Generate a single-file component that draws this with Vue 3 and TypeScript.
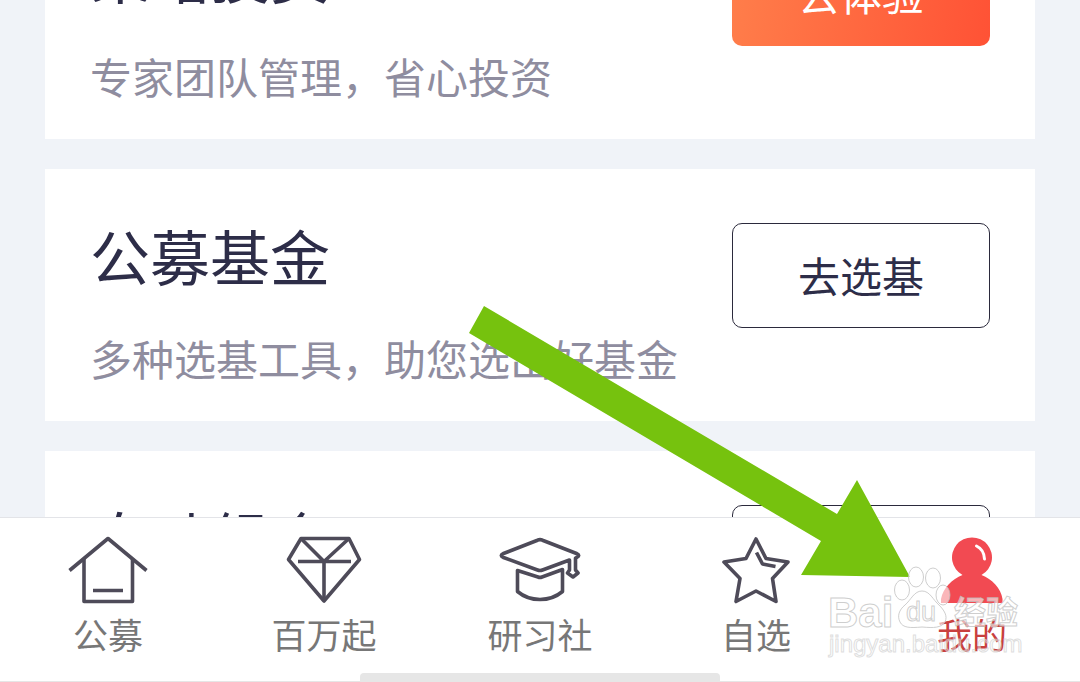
<script setup lang="ts">
import { ref } from 'vue'

interface FundCard {
  title: string
  desc: string
  action: string
  primary?: boolean
}

interface Tab {
  id: string
  label: string
}

const cards: FundCard[] = [
  { title: '策略投资', desc: '专家团队管理，省心投资', action: '去体验', primary: true },
  { title: '公募基金', desc: '多种选基工具，助您选出好基金', action: '去选基' },
  { title: '自动组合', desc: '智能定投，自动调仓', action: '去看看' },
]

const tabs: Tab[] = [
  { id: 'home', label: '公募' },
  { id: 'diamond', label: '百万起' },
  { id: 'study', label: '研习社' },
  { id: 'star', label: '自选' },
  { id: 'mine', label: '我的' },
]

const active = ref('mine')
</script>

<template>
  <div class="app">
    <main class="feed">
      <section v-for="card in cards" :key="card.title" class="card">
        <div class="info">
          <h2 class="title">{{ card.title }}</h2>
          <p class="desc">{{ card.desc }}</p>
        </div>
        <button type="button" class="action" :class="{ primary: card.primary }">{{ card.action }}</button>
      </section>
    </main>

    <footer class="footer">
      <nav class="tabs">
        <button
          v-for="tab in tabs"
          :key="tab.id"
          type="button"
          class="tab"
          :class="{ active: active === tab.id }"
          @click="active = tab.id"
        >
          <svg class="icon" viewBox="0 0 84 72" aria-hidden="true">
            <g v-if="tab.id === 'home'">
              <path d="M3.500 35.500L42 3.500L80.500 35.500" />
              <path d="M18 24V66.500H66.500V24M27 55.500H57" />
            </g>
            <g v-else-if="tab.id === 'diamond'">
              <path d="M19 3.500H67L77.500 24.500L42 66L6.500 24.500Z" />
              <path d="M19 3.500L42 26.500L67 3.500M42 26.500V66M16 26.500H69" />
            </g>
            <g v-else-if="tab.id === 'study'">
              <path d="M39.500 5.200Q42 4 44.500 5.200L78.500 18.500Q83 20.500 78.500 22.500L77.500 23V35L80 38L75 42L69.500 38L71.500 35V25L44.500 35Q42 36 39.500 35L5.500 22.500Q1 20.500 5.500 18.500Z" />
              <path d="M19.500 35.500V56.500Q29 64.500 42 64.500Q55 64.500 64.500 56.500V34.500L44 42Q42 42.800 40 42Z" />
            </g>
            <g v-else-if="tab.id === 'star'">
              <path d="M42 4L52 23.500L74 27L58.500 43.500L62 66.500L42 56L22 66.500L26 43.500L10 27L32 23.500Z" />
              <path d="M42.500 17.500L48.500 29L61.500 31.500" />
            </g>
            <g v-else>
              <path class="solid" d="M32.500 40A20 20 0 1 1 51.500 40C62 44 71 53 72.500 64V68H11V64C13 53 22 44 32.500 40Z" />
              <path class="shine" d="M46.500 11Q54 14.500 54.500 24" />
            </g>
          </svg>
          <span class="label">{{ tab.label }}</span>
        </button>
      </nav>
      <div class="home-bar"></div>
    </footer>

    <svg class="overlay" viewBox="0 0 1080 682" preserveAspectRatio="xMaxYMax meet" aria-hidden="true">
      <polygon class="arrow" points="484,306 837,514 857,480 910,577 801,575 821,541 469,333" />
      <g class="mark">
        <ellipse cx="902" cy="590" rx="7.500" ry="10" />
        <ellipse cx="916" cy="577" rx="7.500" ry="10" />
        <ellipse cx="933" cy="578" rx="7.500" ry="10" />
        <ellipse cx="943" cy="595" rx="7" ry="10" />
        <path d="M922 591C914 591 911 600 905 605C899 610 897 616 900 622C903 628 910 628 922 627C934 628 941 628 945 622C948 616 944 610 939 605C933 600 930 591 922 591Z" />
        <text class="latin" x="828" y="627">Bai</text>
        <text class="du" x="906" y="621">du</text>
        <text class="hanzi" x="954" y="624">经验</text>
        <text class="site" x="829" y="652">jingyan.baidu.com</text>
      </g>
    </svg>
  </div>
</template>

<style>
body {
  margin: 0;
}
</style>

<style scoped>
.app {
  position: relative;
  display: flex;
  flex-direction: column;
  height: 100vh;
  overflow: hidden;
  background: #f0f3f8;
  font-family: "Noto Sans CJK SC", sans-serif;
}

.feed {
  flex: 1;
  min-height: 0;
  overflow: hidden;
  display: flex;
  flex-direction: column;
  gap: 30px;
  padding: 0 45px;
}

.card {
  flex: none;
  display: flex;
  justify-content: space-between;
  align-items: flex-start;
  padding: 54px 45px 33px;
  background: #fff;
}

/* The list rests partly scrolled, with its first card under the top edge. */
.card:first-child {
  margin-top: -113px;
}

.title {
  margin: 0 0 41px;
  font-size: 60px;
  line-height: 64px;
  font-weight: 400;
  color: #2d2d48;
}

.desc {
  margin: 0;
  font-size: 42px;
  line-height: 60px;
  color: #8f8d9f;
}

.action {
  box-sizing: border-box;
  width: 258px;
  height: 105px;
  padding: 0 0 2px;
  border: 1px solid #2b2a3c;
  border-radius: 10px;
  background: #fff;
  color: #2d2d48;
  font-family: inherit;
  font-size: 42px;
  line-height: 60px;
}

.action.primary {
  border: 0;
  background: linear-gradient(100deg, #ff7f4b, #ff5235);
  color: #fff;
}

.footer {
  flex: none;
  border-top: 1px solid #e3e4e8;
  border-bottom: 1px solid #e6e6e6;
  background: #fff;
}

.tabs {
  display: grid;
  grid-template-columns: repeat(5, 1fr);
  padding-top: 17px;
}

.tab {
  display: flex;
  flex-direction: column;
  align-items: center;
  gap: 4px;
  padding: 0;
  border: 0;
  background: none;
  color: #777;
  font-family: inherit;
}

.tab.active {
  color: #c9403e;
}

.icon {
  width: 84px;
  height: 72px;
  fill: none;
  stroke: #4e4b59;
  stroke-width: 3.6;
  stroke-linejoin: round;
}

.icon .solid {
  fill: #f24a52;
  stroke: none;
}

.icon .shine {
  stroke: #fff;
  stroke-width: 3;
  stroke-linecap: round;
}

.label {
  font-size: 35px;
  line-height: 46px;
}

.home-bar {
  width: 33.333%;
  height: 8px;
  margin: 16px auto 0;
  border-radius: 4px 4px 0 0;
  background: #e6e6e6;
}

.overlay {
  position: absolute;
  inset: 0;
  width: 100%;
  height: 100%;
  pointer-events: none;
}

.arrow {
  fill: #76c20e;
}

.mark {
  fill: rgba(255, 255, 255, 0.6);
  stroke: rgba(190, 190, 190, 0.75);
  stroke-width: 1;
}

.latin {
  font: 700 42px "Liberation Sans", sans-serif;
}

.du {
  font: 400 27px "Liberation Sans", sans-serif;
}

.hanzi {
  font: 700 32px "Noto Sans CJK SC", sans-serif;
}

.site {
  font: 400 24px "Liberation Sans", sans-serif;
  fill: rgba(255, 255, 255, 0.4);
  stroke: rgba(200, 200, 200, 0.6);
}
</style>
